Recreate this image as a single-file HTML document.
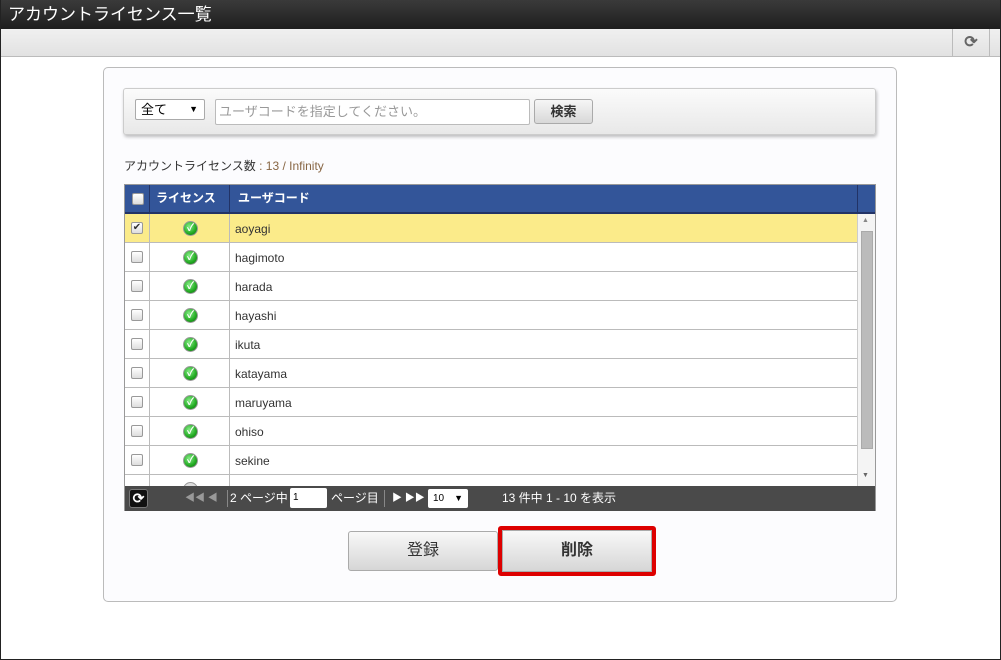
<!DOCTYPE html>
<html><head><meta charset="utf-8"><style>
*{box-sizing:border-box;margin:0;padding:0}
body{width:1001px;height:660px;position:relative;background:#fff;font-family:"Liberation Sans","Noto Sans CJK JP",sans-serif;font-size:12px;color:#333;overflow:hidden}
.a{position:absolute}
.frame{left:0;top:0;width:1001px;height:660px;border:1px solid #222;border-top:none}
.title{left:0;top:0;width:1001px;height:29px;background:linear-gradient(#3a3a3a,#1e1e1e);color:#fff;font-size:17px;line-height:29px;padding-left:8px}
.tool{left:1px;top:29px;width:999px;height:28px;background:linear-gradient(#f0f0f0,#e2e2e2);border-bottom:1px solid #bbb}
.panel{left:103px;top:67px;width:794px;height:535px;border:1px solid #bbb;border-radius:5px;background:#fcfcfe}
.search{left:123px;top:88px;width:753px;height:47px;border:1px solid #ccc;border-radius:3px;background:linear-gradient(#fbfbfb,#e8e8e8);box-shadow:1px 2px 3px rgba(0,0,0,.25)}
.sel{left:135px;top:99px;width:70px;height:21px;border:1px solid #aaa;border-radius:2px;background:#fff;font-size:13px;line-height:19px;padding-left:5px;color:#000}
.inp{left:215px;top:99px;width:315px;height:26px;border:1px solid #bbb;border-radius:2px;background:#fff;color:#999;font-size:13px;line-height:24px;padding-left:3px}
.btn{left:534px;top:99px;width:59px;height:25px;border:1px solid #aaa;border-radius:3px;background:linear-gradient(#f6f6f6,#d8d8d8);text-align:center;line-height:23px;font-size:13px;color:#333;font-weight:bold}
.tbl{left:124px;top:184px;width:752px;height:327px;border:1px solid #999;background:#fff}
.hdr{left:0;top:0;width:750px;height:29px;background:#335599;border-bottom:2px solid #223366;color:#fff;font-weight:bold;font-size:12px;line-height:27px}
.row{left:0;width:732px;height:29px;border-bottom:1px solid #bbb}
.row .t{position:absolute;left:110px;top:8px}
.cb{width:12px;height:12px;border:1px solid #999;border-radius:2px;background:linear-gradient(#fff,#ddd)}
.ok{width:15px;height:15px;border-radius:50%;background:radial-gradient(circle at 40% 35%,#8e8,#2a2 60%,#161);border:1px solid #999;color:#fff;font-size:10px;line-height:13px;text-align:center;font-weight:bold}
.pager{left:0;top:301px;width:750px;height:25px;background:#4a4a4a;color:#fff;font-size:12px;line-height:25px}
.b1{left:348px;top:531px;width:150px;height:40px;border:1px solid #aaa;border-radius:3px;background:linear-gradient(#f8f8f8,#d6d6d6);text-align:center;line-height:38px;font-size:16px;color:#333}
.b2{left:498px;top:526px;width:158px;height:50px;border:4px solid #dd0000;border-radius:3px}
.b2 div{width:100%;height:100%;background:linear-gradient(#f8f8f8,#d6d6d6);border:1px solid #aaa;text-align:center;line-height:40px;font-size:16px;color:#333;font-weight:bold}
</style></head><body>
<div class="a title">アカウントライセンス一覧</div>
<div class="a tool"></div>
<div class="a" style="left:952px;top:29px;width:38px;height:28px;border-left:1px solid #bbb;border-right:1px solid #bbb;text-align:center;line-height:28px;color:#666;font-size:16px;font-weight:bold">⟳</div>
<div class="a frame"></div>
<div class="a panel"></div>
<div class="a search"></div>
<div class="a sel">全て<span style="position:absolute;right:6px;font-size:9px">▼</span></div>
<div class="a inp">ユーザコードを指定してください。</div>
<div class="a btn">検索</div>
<div class="a" style="left:124px;top:157px;font-size:12px;color:#333">アカウントライセンス数 <span style="color:#864">: 13 / Infinity</span></div>
<div class="a tbl">
 <div class="a hdr">
  <div class="a cb" style="left:7px;top:8px"></div>
  <div class="a" style="left:24px;top:0;height:27px;border-left:1px solid #223366;padding-left:6px;width:80px">ライセンス</div>
  <div class="a" style="left:104px;top:0;height:27px;border-left:1px solid #223366;padding-left:8px;width:620px">ユーザコード</div>
  <div class="a" style="left:732px;top:0;height:27px;border-left:1px solid #223366"></div>
 </div>
 <div class="a" style="left:0;top:29px;width:732px;height:272px;overflow:hidden">
 <div class="a row" style="top:0;background:#fbeb8a"><div class="a cb" style="left:6px;top:8px;font-size:10px;line-height:10px;text-align:center">✔</div><div class="a ok" style="left:58px;top:7px">✓</div><div class="t">aoyagi</div></div>
 <div class="a row" style="top:29px"><div class="a cb" style="left:6px;top:8px"></div><div class="a ok" style="left:58px;top:7px">✓</div><div class="t">hagimoto</div></div>
 <div class="a row" style="top:58px"><div class="a cb" style="left:6px;top:8px"></div><div class="a ok" style="left:58px;top:7px">✓</div><div class="t">harada</div></div>
 <div class="a row" style="top:87px"><div class="a cb" style="left:6px;top:8px"></div><div class="a ok" style="left:58px;top:7px">✓</div><div class="t">hayashi</div></div>
 <div class="a row" style="top:116px"><div class="a cb" style="left:6px;top:8px"></div><div class="a ok" style="left:58px;top:7px">✓</div><div class="t">ikuta</div></div>
 <div class="a row" style="top:145px"><div class="a cb" style="left:6px;top:8px"></div><div class="a ok" style="left:58px;top:7px">✓</div><div class="t">katayama</div></div>
 <div class="a row" style="top:174px"><div class="a cb" style="left:6px;top:8px"></div><div class="a ok" style="left:58px;top:7px">✓</div><div class="t">maruyama</div></div>
 <div class="a row" style="top:203px"><div class="a cb" style="left:6px;top:8px"></div><div class="a ok" style="left:58px;top:7px">✓</div><div class="t">ohiso</div></div>
 <div class="a row" style="top:232px"><div class="a cb" style="left:6px;top:8px"></div><div class="a ok" style="left:58px;top:7px">✓</div><div class="t">sekine</div></div>
 <div class="a row" style="top:261px"><div class="a ok" style="left:58px;top:7px;background:#ddd"></div></div>
 <div class="a" style="left:24px;top:0;width:1px;height:272px;background:#bbb"></div>
 <div class="a" style="left:104px;top:0;width:1px;height:272px;background:#bbb"></div>
 </div>
 <div class="a" style="left:732px;top:29px;width:18px;height:272px;background:#f4f4f4;border-left:1px solid #ccc">
  <div class="a" style="left:4px;top:3px;font-size:7px;color:#888">▲</div>
  <div class="a" style="left:3px;top:17px;width:12px;height:218px;background:#bbb;border:1px solid #aaa"></div>
  <div class="a" style="left:4px;top:258px;font-size:7px;color:#666">▼</div>
 </div>
 <div class="a pager">
  <div class="a" style="left:4px;top:3px;width:19px;height:19px;background:#111;border-radius:3px;border:1px solid #777;text-align:center;line-height:17px;font-weight:bold;font-size:14px">⟳</div>
  <div class="a" style="left:60px;top:0;color:#999;font-size:10px">◀◀ ◀</div>
  <div class="a" style="left:102px;top:4px;width:1px;height:17px;background:#888"></div>
  <div class="a" style="left:105px;top:0">2 ページ中</div>
  <div class="a" style="left:165px;top:2px;width:37px;height:20px;background:#fff;border-radius:2px;color:#000;font-size:10px;line-height:20px;padding-left:3px">1</div>
  <div class="a" style="left:206px;top:0">ページ目</div>
  <div class="a" style="left:259px;top:4px;width:1px;height:17px;background:#888"></div>
  <div class="a" style="left:267px;top:0;font-size:10px">▶ ▶▶</div>
  <div class="a" style="left:303px;top:3px;width:40px;height:19px;background:#fff;border-radius:2px;color:#000;font-size:10px;line-height:19px;padding-left:5px">10 <span style="position:absolute;right:5px;font-size:9px">▼</span></div>
  <div class="a" style="left:377px;top:0">13 件中 1 - 10 を表示</div>
 </div>
</div>
<div class="a b1">登録</div>
<div class="a b2"><div>削除</div></div>
</body></html>
